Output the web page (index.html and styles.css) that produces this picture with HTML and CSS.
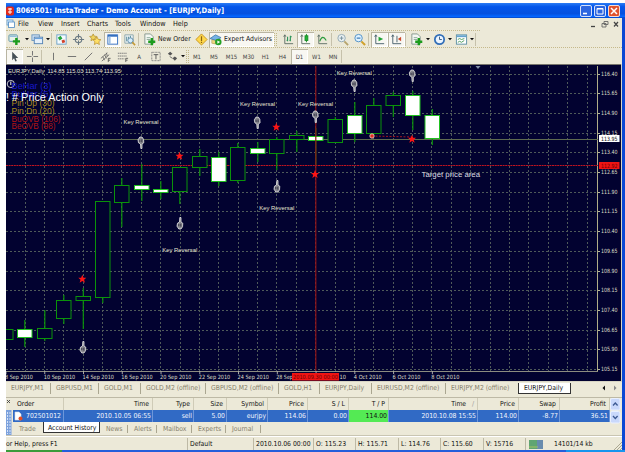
FILE: index.html
```html
<!DOCTYPE html>
<html lang="en">
<head>
<meta charset="utf-8">
<title>InstaTrader</title>
<link rel="stylesheet" href="styles.css">
</head>
<body>
<svg width="0" height="0" class="defs">
  <defs>
    <symbol id="plus" viewBox="0 0 8 8"><path d="M2.700 0h2.600v2.700H8v2.600H5.300V8H2.700V5.300H0V2.700h2.700z" fill="#1c9c1c"/></symbol>
    <symbol id="i-new" viewBox="0 0 14 14"><rect x="1" y="2" width="9" height="7" rx="1" fill="#e9f3e9" stroke="#5c93a8"/><path d="M2 3.500h7" stroke="#6fa7d8"/><use href="#plus" x="5" y="5" width="8" height="8"/></symbol>
    <symbol id="i-prof" viewBox="0 0 14 14"><rect x="1" y="2" width="8" height="6" fill="#cfe2f5" stroke="#6a94bd"/><rect x="3.500" y="4.500" width="9" height="7" fill="#e6f0fa" stroke="#5584b5"/><path d="M4 6h8" stroke="#5a96d6"/></symbol>
    <symbol id="i-market" viewBox="0 0 14 14"><rect x="2" y="2" width="10" height="10" fill="#f4faff" stroke="#6ba0c8"/><path d="M3 5l3-2 2 3-3 2z" fill="#25a53a"/><path d="M7 8l3-1 1 3-3 1z" fill="#d2432c"/></symbol>
    <symbol id="i-target" viewBox="0 0 14 14"><circle cx="7" cy="7" r="3.500" fill="none" stroke="#6b7a83" stroke-width="1.200"/><path d="M7 1v5M7 8v5M1 7h5M8 7h5" stroke="#6b7a83" stroke-width="1.200"/></symbol>
    <symbol id="i-nav" viewBox="0 0 14 14"><path d="M4.500 1l1.200 2.400 2.600.3-1.900 1.900.5 2.700-2.400-1.300-2.400 1.300.5-2.700L.7 3.700l2.600-.3z" fill="#efd35c" stroke="#b4902c" stroke-width=".8"/><path d="M8.500 4l1.300 2.800 3 .4-2.200 2.100.6 3.100-2.700-1.500L5.800 12.400l.6-3.100L4.200 7.200l3-.4z" fill="#ffe067" stroke="#bb922b" stroke-width=".8"/></symbol>
    <symbol id="i-term" viewBox="0 0 14 14"><rect x="2" y="2" width="10.500" height="10" fill="#fff" stroke="#346fc0"/><path d="M2 3h10" stroke="#346fc0" stroke-width="2"/><path d="M4 4v8" stroke="#9fc1e5" stroke-width="2"/></symbol>
    <symbol id="i-test" viewBox="0 0 14 14"><path d="M2 2h9v9H2z" fill="#edf3f5" stroke="#8da5ab"/><path d="M4 4v5M6 4v4M8 3v4" stroke="#4e8794"/><circle cx="8" cy="8" r="2.800" fill="#d5edfb" stroke="#628ba8"/><path d="M10 10l3 3" stroke="#c69a33" stroke-width="1.700"/></symbol>
    <symbol id="i-order" viewBox="0 0 14 14"><path d="M2 1h6l3 3v8H2z" fill="#f4f7f2" stroke="#86978c"/><path d="M4 5h4M4 7h4" stroke="#8daa9a"/><use href="#plus" x="5.500" y="5.500" width="8" height="8"/></symbol>
    <symbol id="i-meta" viewBox="0 0 14 14"><path d="M7 1l6 6-6 6-6-6z" fill="#ffd84b" stroke="#c7951e"/><path d="M7 3.500v5M7 9.300v1.400" stroke="#8d6410" stroke-width="1.300"/></symbol>
    <symbol id="i-ea" viewBox="0 0 14 14"><path d="M3 7v4q4 2 7-1V6L8 8z" fill="#efd780" stroke="#aa9350" stroke-width=".6"/><path d="M1 6l6-4 6 3-5 3z" fill="#75b3e6" stroke="#4076a8" stroke-width=".8"/><circle cx="10" cy="9.700" r="3.500" fill="#26a126"/><path d="M9 8v3.500l3-1.700z" fill="#fff"/></symbol>
    <symbol id="i-bars" viewBox="0 0 14 14"><path d="M3 2v9.500h9M3 2l-1.200 2M3 2l1.200 2" fill="none" stroke="#5f6f67"/><path d="M6 4v5M5 8h1M9 3v6M9 4h1.500M9 8H8" stroke="#2d955a" stroke-width="1.200"/></symbol>
    <symbol id="i-candle" viewBox="0 0 14 14"><path d="M3 2v9.500h9M3 2l-1.200 2M3 2l1.200 2" fill="none" stroke="#5f6f67"/><path d="M8 1v9" stroke="#168b24"/><rect x="6.500" y="3" width="3" height="5" fill="#20b435" stroke="#168b24"/></symbol>
    <symbol id="i-line" viewBox="0 0 14 14"><path d="M3 2v9.500h9M3 2l-1.200 2M3 2l1.200 2" fill="none" stroke="#5f6f67"/><path d="M4 9q3-8 7-1" fill="none" stroke="#2c9b3c" stroke-width="1.200"/></symbol>
    <symbol id="i-zin" viewBox="0 0 14 14"><path d="M9 9l4 4" stroke="#b6a36b" stroke-width="2"/><circle cx="6" cy="5.500" r="4" fill="#eaf1f2" stroke="#92a8b2"/><path d="M4 5.500h4M6 3.500v4" stroke="#75909e"/></symbol>
    <symbol id="i-zout" viewBox="0 0 14 14"><path d="M9 9l4 4" stroke="#cfa12b" stroke-width="2.200"/><circle cx="6" cy="5.500" r="4" fill="#dff2ff" stroke="#4d8ec5"/><path d="M4 5.500h4" stroke="#2d6fae" stroke-width="1.200"/></symbol>
    <symbol id="i-scroll" viewBox="0 0 14 14"><path d="M3 2v9.500h9M3 2l-1.200 2M3 2l1.200 2" fill="none" stroke="#47616d"/><path d="M6 4v5l5-2.500z" fill="#20a334"/></symbol>
    <symbol id="i-shift" viewBox="0 0 14 14"><path d="M3 2v9.500h9M3 2l-1.200 2M3 2l1.200 2M7.500 3v7" fill="none" stroke="#47616d"/><path d="M12 4v5L8.500 6.500z" fill="#cc4a2b"/></symbol>
    <symbol id="i-clock" viewBox="0 0 14 14"><circle cx="7" cy="7" r="5" fill="#eaf4ff" stroke="#326fb8" stroke-width="1.900"/><path d="M7 4v3h2.500" fill="none" stroke="#35567e"/></symbol>
    <symbol id="i-tpl" viewBox="0 0 14 14"><rect x="1.500" y="2" width="11" height="10" fill="#fff" stroke="#5e90a5"/><path d="M2 3.500h10" stroke="#62a2cf" stroke-width="2"/><path d="M3 7l2-1 2 1 3-1M3 10l2-1 2 1 3-2" fill="none" stroke="#49995a"/></symbol>
    <symbol id="i-cursor" viewBox="0 0 14 14"><path d="M4.500 2v9l2-2 1.500 3.500 1.500-.7L8.200 8.500H11z" fill="#475057"/></symbol>
    <symbol id="i-cross" viewBox="0 0 14 14"><path d="M7 1v5M7 8v5M1 7h5M8 7h5" stroke="#777" stroke-width="1.100"/></symbol>
    <symbol id="i-v" viewBox="0 0 14 14"><path d="M7 3v8" stroke="#6d6d6d"/></symbol>
    <symbol id="i-h" viewBox="0 0 14 14"><path d="M3 7h9" stroke="#6d6d6d"/></symbol>
    <symbol id="i-s" viewBox="0 0 14 14"><path d="M3 11l8-8" stroke="#6d6d6d"/></symbol>
    <symbol id="i-chan" viewBox="0 0 14 14"><path d="M2 9l7-6M3 12l8-7M4 7l2 4M6 5l2 4M8 3l1 4" stroke="#666" stroke-width=".9"/><path d="M10 13V9h2.500M10 11h2" fill="none" stroke="#444" stroke-width=".8"/></symbol>
    <symbol id="i-fibo" viewBox="0 0 14 14"><path d="M2 3.500h10M2 6.500h10M2 9.500h7" stroke="#777" stroke-dasharray="1.500 .5"/><path d="M10.500 13V9H13M10.500 11h2" fill="none" stroke="#444" stroke-width=".8"/></symbol>
    <symbol id="i-box" viewBox="0 0 14 14"><rect x="3" y="2.500" width="9" height="9" fill="none" stroke="#777" stroke-dasharray="1 .6"/><path d="M5 5h5M7.500 5v5" stroke="#555"/></symbol>
    <symbol id="i-arr" viewBox="0 0 14 14"><path d="M2 4l2.500-2L7 4 4.500 6zM7 9l2.500-2L12 9l-2.500 2.500z" fill="#555"/><path d="M4 7l3 2" stroke="#666"/></symbol>
    <symbol id="drop" viewBox="0 0 4 4"><path d="M0 1h4L2 3.300z" fill="#111"/></symbol>
  </defs>
</svg>

<main class="window">
  <header class="titlebar">
    <svg class="logo" viewBox="0 0 9 10"><rect width="8" height="9" y=".5" rx="2" fill="#e12a1c"/><path d="M2 3h4M4 2v6M2 6h4" stroke="#fff"/></svg>
    <span class="title">8069501: InstaTrader - Demo Account - [EURJPY,Daily]</span>
    <span class="cap">
      <svg viewBox="0 0 12 12"><rect x=".5" y=".5" width="11" height="11" rx="1.500" fill="#2c66e0" stroke="#d5e2fb"/><path d="M3 8.500h4" stroke="#fff" stroke-width="1.600"/></svg>
      <svg viewBox="0 0 12 12"><rect x=".5" y=".5" width="11" height="11" rx="1.500" fill="#2c66e0" stroke="#d5e2fb"/><path d="M3 3.500h6v5.500H3zM3 4h6" fill="none" stroke="#fff"/></svg>
      <svg viewBox="0 0 12 12"><rect x=".5" y=".5" width="11" height="11" rx="1.500" fill="#e0532c" stroke="#f5dcd4"/><path d="M3 3l6 6M9 3L3 9" stroke="#fff" stroke-width="1.500"/></svg>
    </span>
  </header>

  <nav class="menu">
    <svg viewBox="0 0 10 10" class="doc"><rect x="1" y="1" width="6" height="5" fill="#dceeff" stroke="#5f98cf" stroke-width=".8"/><rect x="2.500" y="3" width="6" height="5.500" fill="#fff" stroke="#4e89c2" stroke-width=".8"/></svg>
    <span>File</span><span>View</span><span>Insert</span><span>Charts</span><span>Tools</span><span>Window</span><span>Help</span>
    <svg viewBox="0 0 30 10" class="mdi"><path d="M1 7.500h4" stroke="#444" stroke-width="1.300"/><path d="M14 2.500h4v3h-4zM12 4.500h4v3.500h-4z" fill="#ece9d8" stroke="#666" stroke-width=".9"/><path d="M24 3l4 4.500M28 3l-4 4.500" stroke="#444" stroke-width="1.200"/></svg>
  </nav>

  <div class="bar main-bar">
    <b class="ico"><svg><use href="#i-new"/></svg></b><svg class="dd"><use href="#drop"/></svg>
    <b class="ico"><svg><use href="#i-prof"/></svg></b><svg class="dd"><use href="#drop"/></svg>
    <i class="sep"></i>
    <b class="ico"><svg><use href="#i-market"/></svg></b>
    <b class="ico"><svg><use href="#i-target"/></svg></b>
    <b class="ico"><svg><use href="#i-nav"/></svg></b>
    <b class="ico on"><svg><use href="#i-term"/></svg></b>
    <b class="ico"><svg><use href="#i-test"/></svg></b>
    <i class="sep"></i>
    <b class="ico wide"><svg><use href="#i-order"/></svg><span>New Order</span></b>
    <b class="ico"><svg><use href="#i-meta"/></svg></b>
    <b class="ico wide on"><svg><use href="#i-ea"/></svg><span>Expert Advisors</span></b>
    <i class="grip"></i>
    <b class="ico"><svg><use href="#i-bars"/></svg></b>
    <b class="ico on"><svg><use href="#i-candle"/></svg></b>
    <b class="ico"><svg><use href="#i-line"/></svg></b>
    <i class="sep"></i>
    <b class="ico"><svg><use href="#i-zin"/></svg></b>
    <b class="ico"><svg><use href="#i-zout"/></svg></b>
    <i class="sep"></i>
    <b class="ico on"><svg><use href="#i-scroll"/></svg></b>
    <b class="ico on"><svg><use href="#i-shift"/></svg></b>
    <i class="sep"></i>
    <b class="ico"><svg><use href="#i-order"/></svg></b><svg class="dd"><use href="#drop"/></svg>
    <b class="ico"><svg><use href="#i-clock"/></svg></b><svg class="dd"><use href="#drop"/></svg>
    <b class="ico"><svg><use href="#i-tpl"/></svg></b><svg class="dd"><use href="#drop"/></svg>
    <i class="sep"></i>
  </div>

  <div class="bar line-bar">
    <b class="ico on"><svg><use href="#i-cursor"/></svg></b>
    <b class="ico"><svg><use href="#i-cross"/></svg></b>
    <i class="sep"></i>
    <b class="ico"><svg><use href="#i-v"/></svg></b>
    <b class="ico"><svg><use href="#i-h"/></svg></b>
    <b class="ico"><svg><use href="#i-s"/></svg></b>
    <b class="ico"><svg><use href="#i-chan"/></svg></b>
    <b class="ico"><svg><use href="#i-fibo"/></svg></b>
    <span class="tf">A</span>
    <b class="ico"><svg><use href="#i-box"/></svg></b>
    <b class="ico"><svg><use href="#i-arr"/></svg></b><svg class="dd"><use href="#drop"/></svg>
    <i class="grip"></i>
    <span class="tf">M1</span><span class="tf">M5</span><span class="tf">M15</span><span class="tf">M30</span><span class="tf">H1</span><span class="tf">H4</span><span class="tf on">D1</span><span class="tf">W1</span><span class="tf">MN</span>
    <i class="sep"></i>
  </div>

  <svg class="chart" id="chart" viewBox="6 64 616 318"></svg>

  <div class="chart-tabs">
    <span>EURJPY,M1</span><span>GBPUSD,M1</span><span>GOLD,M1</span><span>GOLD,M2 (offline)</span><span>GBPUSD,M2 (offline)</span><span>GOLD,H1</span><span>EURJPY,Daily</span><span>EURUSD,M2 (offline)</span><span>EURJPY,M2 (offline)</span><span class="active">EURJPY,Daily</span>
    <svg viewBox="0 0 20 8"><path d="M5 1.500v5L2.500 4z" fill="#111"/><path d="M14 1.500v5L16.500 4z" fill="#888"/></svg>
  </div>

  <section class="terminal">
    <aside><svg viewBox="0 0 6 37"><path d="M1 2l3 3M4 2L1 5" stroke="#444" stroke-width=".9"/><rect y="12" width="5.500" height="25" fill="#7da2dd"/><path d="M1.500 14v22M4 14v22" stroke="#d8e4f7" stroke-dasharray="2 1"/></svg></aside>
    <div class="table">
      <div class="row head"><span>Order</span><span>Time</span><span>Type</span><span>Size</span><span>Symbol</span><span>Price</span><span>S / L</span><span>T / P</span><span>Time &nbsp; <em>/</em></span><span>Price</span><span>Swap</span><span>Profit</span></div>
      <div class="row data"><span><svg viewBox="0 0 9 10"><path d="M1 1h4l2 2v6H1z" fill="#fff" stroke="#d6dbe4" stroke-width=".6"/><circle cx="6.500" cy="7.500" r="2" fill="#df4b25"/></svg>702501012</span><span>2010.10.05 06:55</span><span>sell</span><span>5.00</span><span>eurjpy</span><span>114.06</span><span>0.00</span><span class="hit">114.00</span><span>2010.10.08 15:55</span><span>114.00</span><span>-8.77</span><span>36.51</span></div>
      <div class="pages"><span>Trade</span><span class="active">Account History</span><span>News</span><span>Alerts</span><span>Mailbox</span><span>Experts</span><span>Journal</span></div>
    </div>
    <svg class="scroll" viewBox="0 0 11 26"><rect x=".5" y=".5" width="9.500" height="11.500" rx="1.500" fill="#c9d8fb" stroke="#e9f0ff"/><rect x=".5" y="13.500" width="9.500" height="11.500" rx="1.500" fill="#c9d8fb" stroke="#e9f0ff"/><path d="M3 7.500L5.300 5l2.300 2.500M3 18l2.300 2.500L7.600 18" fill="none" stroke="#3d5a93" stroke-width="1.300"/></svg>
  </section>

  <footer class="status">
    <span>or Help, press F1</span><span>Default</span><span>2010.10.06 00:00</span><span>O: 115.23</span><span>H: 115.71</span><span>L: 114.76</span><span>C: 115.60</span><span>V: 15716</span>
    <span class="net"><svg viewBox="0 0 15 9"><path d="M1 0v9M3 0v9M5 0v9M7 0v9" stroke="#16803c" stroke-width="1.300"/><path d="M9 0v9M11 0v9M13 0v9" stroke="#235a98" stroke-width="1.300"/><path d="M0 7h9" stroke="#c6d35c" stroke-width=".7"/></svg>14101/14 kb</span>
    <svg class="size" viewBox="0 0 9 9"><path d="M1 9l8-8M4 9l5-5M7 9l2-2" stroke="#aaa68f"/></svg>
  </footer>
  <div class="taskbar"></div>
</main>
<script src="chart.js"></script>
</body>
</html>
```

FILE: styles.css
```css
* { box-sizing: border-box; }
body {
  margin: 0;
  background: #fff;
  font: 6.8px/1 "DejaVu Sans Condensed", "DejaVu Sans", sans-serif;
  color: #111;
  overflow: hidden;
}
svg { display: block; flex: none; }
.defs { position: absolute; }
.window {
  display: flex;
  flex-direction: column;
  width: 619px;
  height: 449px;
  margin: 3px 0 0 6px;
  background: #ece9d8;
  border-right: 3px solid #0b48d4;
  white-space: nowrap;
}
.titlebar {
  display: flex;
  align-items: center;
  height: 15px;
  margin-right: -3px;
  padding-right: 5px;
  background: linear-gradient(#2b7cf4, #0456ea 25%, #0551df 70%, #0566ff 90%, #0444c0);
  color: #fff;
}
.logo { width: 9px; height: 10px; }
.title { margin-left: 1px; font: bold 7.6px/1 "DejaVu Sans Condensed", sans-serif; }
.cap { display: flex; gap: 2px; margin-left: auto; }
.cap svg { width: 12px; height: 12px; }

.menu {
  display: grid;
  grid-template-columns: 12px 20px 23px 26px 28px 25px 33px 1fr 32px;
  align-items: center;
  height: 12px;
  font-size: 7.2px;
}
.doc, .mdi { height: 10px; }
.doc { width: 10px; }
.mdi { width: 30px; }

.bar { display: grid; align-items: center; border-top: 1px dotted #c5b98b; }
.main-bar {
  height: 17px;
  grid-template-columns: 17px 7px 15px 6px 2px 17px 17px 17px 17px 17px 5px 50px 16px 65px 6px 17px 17px 17px 3px 17px 17px 3px 17px 17px 3px 17px 6px 16px 6px 16px 6px 2px;
  width: 474px;
}
.line-bar {
  height: 17px;
  grid-template-columns: 17px 18px 2px 20px 17px 17px 17px 17px 16px 17px 16px 6px 3px 16px 18px 17px 17px 17px 17px 17px 17px 16px 2px;
  justify-content: start;
}
.ico {
  display: flex;
  align-items: center;
  justify-content: center;
  height: 15px;
  font-weight: normal;
}
.ico svg { width: 13px; height: 13px; }
.on { background: #f8f7f2; box-shadow: inset 1px 1px #b9b5a2, inset -1px -1px #fff; }
.wide { justify-content: flex-start; gap: 2px; }
.dd { width: 4px; height: 4px; justify-self: center; }
.sep { height: 13px; width: 1px; background: #c6c1ab; }
.grip { height: 13px; width: 3px; border: 1px dotted #c3b98a; border-width: 0 1px; }
.tf {
  height: 15px;
  line-height: 15px;
  text-align: center;
  color: #444;
  font-size: 6px;
}

.chart { width: 616px; height: 318px; }

.chart-tabs {
  display: grid;
  grid-template-columns: 45px 48px 42px 65px 73px 41px 52px 74px 72px 53px 1fr;
  height: 16px;
  padding-top: 1px;
  border-bottom: 1px solid #bdb9a5;
  color: #85806c;
}
.chart-tabs span { height: 11px; line-height: 11px; padding-left: 5px; border-right: 1px solid #aaa690; }
.chart-tabs span:nth-child(9) { border: 0; }
.chart-tabs .active { background: #fff; color: #111; border: 1px solid #333; border-top: 0; }
.chart-tabs svg { width: 20px; height: 8px; margin: 1px 2px 0 auto; }

.terminal { display: flex; height: 38px; border-bottom: 1px solid #c9c5b2; }
.terminal aside { width: 7px; }
.terminal aside svg { width: 6px; height: 37px; }
.table { width: 597px; }
.row {
  display: grid;
  grid-template-columns: 51px 89px 41px 33px 41px 40px 41px 40px 89px 41px 41px 50px;
  height: 12px;
  line-height: 12px;
  text-align: right;
}
.row span { padding-right: 3px; border-right: 1px solid #cfcbb7; }
.row span:first-child { text-align: left; padding-left: 4px; }
.row em { color: #999; font-style: normal; }
.data { background: #316ac5; color: #f1f5fc; }
.row.data span { border-color: #6d97da; padding-right: 1px; }
.row.data span:first-child { display: flex; align-items: center; padding-left: 1px; gap: 3px; }
.data svg { width: 9px; height: 10px; }
.row .hit { background: #54ea54; color: #111; }
.pages {
  display: grid;
  grid-template-columns: 30px 57px 28px 29px 35px 34px 35px;
  color: #85806c;
}
.pages span { margin-top: 3px; height: 8px; line-height: 8px; padding-left: 6px; border-right: 1px solid #aaa690; }
.pages span:first-child { border: 0; }
.pages .active { margin-top: 0; height: 11px; line-height: 12px; padding-left: 4px; background: #fff; color: #111; border: 1px solid #333; border-top: 0; }
.scroll { width: 11px; height: 26px; }

.status {
  display: grid;
  grid-template-columns: 181px 66px 60px 42px 43px 42px 43px 42px 1fr 9px;
  height: 14px;
  padding-top: 1px;
  border-top: 1px solid #fff;
}
.status span { line-height: 12px; padding-left: 2px; border-left: 1px solid #bdb9a5; }
.status span:first-child { padding: 0; border: 0; }
.status .net { display: flex; align-items: center; gap: 10px; padding-left: 3px; }
.net svg { width: 15px; height: 9px; }
.size { width: 9px; height: 9px; align-self: end; }
.taskbar { height: 2px; margin-right: -3px; background: linear-gradient(90deg, #3b9b3b 56px, #245edb 56px 560px, #1795ee 560px); }

.small { font: 5.8px "DejaVu Sans Condensed", sans-serif; fill: #dedec8; }
.dark { fill: #111; }
.maroon { fill: #6b0000; }
.label { font: 6.2px "Liberation Sans", sans-serif; fill: #e4e4d0; }
.target { font: 8px "Liberation Sans", sans-serif; fill: #dedee0; }
.heading { font: 10.500px "Liberation Sans", sans-serif; fill: #fff; }
.legend { font: 8.800px "Liberation Sans", sans-serif; }
.blue { fill: #1818c8; }
.gold { fill: #a88a18; }
.red { fill: #b01414; }
```

FILE: chart.js
```javascript
const svg = document.getElementById("chart");
const out = [];
const rect = (x, y, w, h, extra) => out.push(`<rect x="${x}" y="${y}" width="${w}" height="${h}" ${extra}/>`);
const line = (x1, y1, x2, y2, extra) => out.push(`<path d="M${x1} ${y1}L${x2} ${y2}" ${extra}/>`);
const text = (x, y, s, cls, len) => out.push(`<text x="${x}" y="${y}" class="${cls}" textLength="${len}" lengthAdjust="spacingAndGlyphs">${s}</text>`);

rect(6, 64, 616, 318, 'fill="#d8d5c4"');
rect(6, 65, 615, 316, 'fill="#020230"');
line(6, 64.5, 621, 64.5, 'stroke="#77756c"');

// Grid
const grid = 'stroke="#4f5a5a" stroke-dasharray="2 2"';
for (let i = 0; i < 30; i++) {
  const x = Math.floor(25 + 19.38 * i) + 0.5;
  line(x, 66, x, 371, grid);
}
for (let i = 0; i < 16; i++) {
  const y = Math.floor(74.3 + 19.67 * i) + 0.5;
  line(6, y, 597, y, grid);
  line(597, y, 600, y, 'stroke="#b5b59a"');
  text(601, y + 1.8, (116.4 - 0.75 * i).toFixed(2), "small", 16.5);
}
line(597.5, 66, 597.5, 371, 'stroke="#b0ae88"');
line(6, 371.5, 598, 371.5, 'stroke="#8c8c80"');

// Price levels
line(6, 139.5, 598, 139.5, 'stroke="#5f6b50"');
line(6, 165.5, 598, 165.5, 'stroke="#c01420" stroke-dasharray="2 .6"');

// Candles: left, top, bottom, wick top, wick bottom, filled
const candles = [
  [-1.500, 329.5, 339.5, 329, 339, 0], [17.5, 329.5, 337.5, 320, 347, 1], [37.5, 328.5, 338.5, 310, 341, 0],
  [56.5, 300.5, 318.5, 295, 324, 0], [76, 296.5, 300.5, 288, 329, 0], [95.5, 201.5, 297.5, 201, 303, 0],
  [114.5, 185.5, 202.5, 178, 227, 0], [134.5, 185.5, 189.5, 164, 201, 1], [153.5, 189.5, 192.5, 181, 199, 1],
  [172.5, 167.5, 191.5, 167, 204, 0], [192.5, 156.5, 167.5, 149, 176, 0], [211.5, 157.5, 181.5, 152, 186, 1],
  [230.5, 147.5, 180.5, 143, 183, 0], [250.5, 148.5, 153.5, 142, 162, 1], [269.5, 139.5, 153.5, 137, 170, 0],
  [289.5, 135.5, 139.5, 131, 152, 0], [308.5, 136.5, 140.5, 128, 165, 1], [328, 119.5, 142.5, 117, 142, 0],
  [347.5, 115.5, 133.5, 102, 142, 1], [366.5, 105.5, 133.5, 98, 134, 0], [386, 95.5, 105.5, 92, 117, 0],
  [405.5, 95.5, 115.5, 91, 130, 1], [425, 115.5, 138.5, 109, 145, 1]
];
for (const [x, top, bottom, high, low, filled] of candles) {
  line(x + 7.3, high, x + 7.3, low, 'stroke="#0a930a" stroke-width="1.200"');
  rect(x, top, 14.5, bottom - top, `fill="${filled ? "#fff" : "#020230"}" stroke="${filled ? "#20c020" : "#0a930a"}"`);
}
line(315.8, 66, 315.8, 371, 'stroke="#8e1218" stroke-width="1.200"');
line(372, 136, 412, 137, 'stroke="#a01420" stroke-dasharray="2 1.500"');

// Marks
const star = (x, y) => out.push(`<path transform="translate(${x} ${y})" d="M0-4.200L1.200-1.300 4-1.200 1.800.7 2.700 3.700 0 2-2.700 3.700-1.800.7-4-1.200-1.200-1.300z" fill="#fb1515"/>`);
[[82.3, 279], [179.5, 156], [276.3, 127], [315, 174.3], [412, 139]].forEach(p => star(...p));
const hand = (x, y, dir) => out.push(`<g transform="translate(${x} ${y}) scale(1 ${dir})"><path d="M-.2-5.500H1V-1L2.800.2 2.500 3.800 1 6H-1.200L-3 3.200-2.500.2-.5-1z" fill="#85858c" stroke="#e8e8e8" stroke-width=".8"/><path d="M-1.200 1v2.200M.8.800v2.800" stroke="#222238" stroke-width=".8"/></g>`);
[[83, 347, 1], [180, 223, 1], [277, 186, 1], [141, 143, -1], [257.3, 123, -1], [315.4, 117, -1], [354.2, 86, -1], [412.3, 76, -1]].forEach(p => hand(...p));
out.push('<circle cx="372" cy="136" r="2.200" fill="#e12a20" stroke="#ead9cf" stroke-width=".8"/>');
out.push('<path d="M475.500 66h5L478 69z" fill="#8290a8"/>');

[[123.5, 124], [162.3, 252], [240, 106], [298, 106], [336.7, 74.5], [259.3, 209.5]].forEach(([x, y]) => text(x, y, "Key Reversal", "label", 35));
text(421.5, 177, "Target price area", "target", 58.500);
text(8, 73, "EURJPY,Daily&#160; 114.85 115.03 113.74 113.95", "label", 113);

// Legend
out.push('<circle cx="10.800" cy="84" r="3.600" fill="none" stroke="#ddd" stroke-width=".9"/><path d="M10.800 81.500V85" stroke="#eee"/>');
text(11.5, 89, "BeHar (3)", "legend blue", 40);
text(11.5, 97, "BuHar (5)", "legend blue", 40);
text(11.5, 105.500, "Pin Up (30)", "legend gold", 43);
text(11.5, 113.500, "Pin Dn (20)", "legend gold", 43);
text(11.5, 121.500, "BuOVB (106)", "legend red", 49);
text(11.5, 129, "BeOVB (98)", "legend red", 44);
text(6, 100.800, "! # Price Action Only", "heading", 98);

// Time axis: label, width, left edge
const dates = [["8 Sep 2010", 28], ["10 Sep 2010", 31.5], ["14 Sep 2010", 31.5], ["16 Sep 2010", 31.5], ["20 Sep 2010", 31.5], ["22 Sep 2010", 31.5], ["24 Sep 2010", 31.5], ["28 Sep", 16.5], ["10", 6.5, 339.5], ["4 Oct 2010", 28], ["6 Oct 2010", 28], ["8 Oct 2010", 28]];
dates.forEach(([label, width, left], i) => {
  const x = 5 + 38.76 * i;
  line(x + 1, 371, x + 1, 374, 'stroke="#aaa"');
  text(left || x, 379, label, "small", width);
});
rect(292, 373, 47, 7.500, 'fill="#f01414"');
text(293, 379, "2010.09.30 00:00", "small maroon", 45);
rect(599, 135, 20.500, 7, 'fill="#fff"');
text(601, 140.800, "113.95", "small dark", 16.5);
rect(599, 162, 20.500, 7, 'fill="#f01414"');
text(601, 167.600, "112.92", "small maroon", 16.5);

svg.innerHTML = out.join("");
```
